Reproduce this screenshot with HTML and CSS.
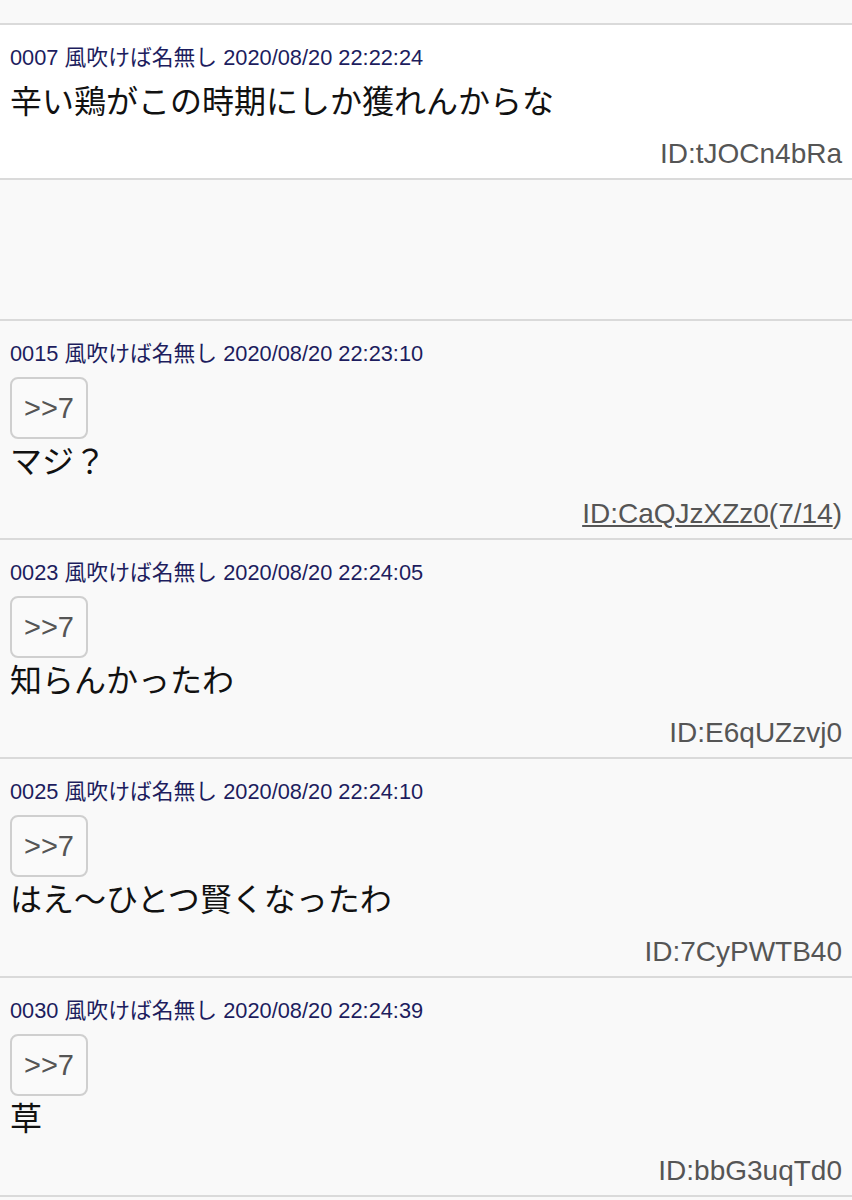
FILE: index.html
```html
<!DOCTYPE html>
<html lang="ja">
<head>
    <meta charset="UTF-8">
    <meta name="viewport" content="width=device-width, initial-scale=1.0">
    <title>スレッド</title>
    <link rel="stylesheet" href="styles.css">
</head>
<body>
<div class="thread">
    <div class="spacer-top"></div>

    <div class="res res-self">
        <div class="res-head">0007 風吹けば名無し 2020/08/20 22:22:24</div>
        <div class="res-body">辛い鶏がこの時期にしか獲れんからな</div>
        <div class="res-id">ID:tJOCn4bRa</div>
    </div>

    <div class="ad-slot"></div>

    <div class="res">
        <div class="res-head">0015 風吹けば名無し 2020/08/20 22:23:10</div>
        <div class="res-body">
            <div class="anchor">&gt;&gt;7</div>
            マジ？
        </div>
        <div class="res-id"><a href="#">ID:CaQJzXZz0(7/14</a>)</div>
    </div>

    <div class="res">
        <div class="res-head">0023 風吹けば名無し 2020/08/20 22:24:05</div>
        <div class="res-body">
            <div class="anchor">&gt;&gt;7</div>
            知らんかったわ
        </div>
        <div class="res-id">ID:E6qUZzvj0</div>
    </div>

    <div class="res">
        <div class="res-head">0025 風吹けば名無し 2020/08/20 22:24:10</div>
        <div class="res-body">
            <div class="anchor">&gt;&gt;7</div>
            はえ～ひとつ賢くなったわ
        </div>
        <div class="res-id">ID:7CyPWTB40</div>
    </div>

    <div class="res">
        <div class="res-head">0030 風吹けば名無し 2020/08/20 22:24:39</div>
        <div class="res-body">
            <div class="anchor">&gt;&gt;7</div>
            草
        </div>
        <div class="res-id">ID:bbG3uqTd0</div>
    </div>
</div>
</body>
</html>
```

FILE: styles.css
```css
body {
    margin: 0;
    background-color: #f9f9f9;
    font-family: "Liberation Sans", "Noto Sans CJK JP", sans-serif;
    color: #111;
}
.thread {
    display: flex;
    flex-direction: column;
}
.spacer-top {
    height: 23px;
    border-bottom: 2px solid #dadada;
}
.ad-slot {
    height: 139px;
    border-bottom: 2px solid #dadada;
}
.res {
    padding: 20px 10px 8px 10px;
    border-bottom: 2px solid #dadada;
}
.res-self {
    background-color: #fff;
}
.res-head {
    font-size: 21.8px;
    line-height: 26px;
    color: #1d1d5e;
    white-space: nowrap;
}
.res-body {
    margin-top: 10px;
    font-size: 32px;
    line-height: 42px;
    color: #111;
}
.anchor {
    width: 74px;
    height: 58px;
    margin-bottom: 2px;
    border: 2px solid #cfcfcf;
    border-radius: 8px;
    display: flex;
    align-items: center;
    justify-content: center;
    font-size: 29px;
    color: #555;
    background-color: #fafafa;
}
.res-id {
    margin-top: 15px;
    text-align: right;
    font-size: 28px;
    line-height: 32px;
    color: #555;
}
.res-id a {
    color: #555;
    text-decoration: underline;
}
```
